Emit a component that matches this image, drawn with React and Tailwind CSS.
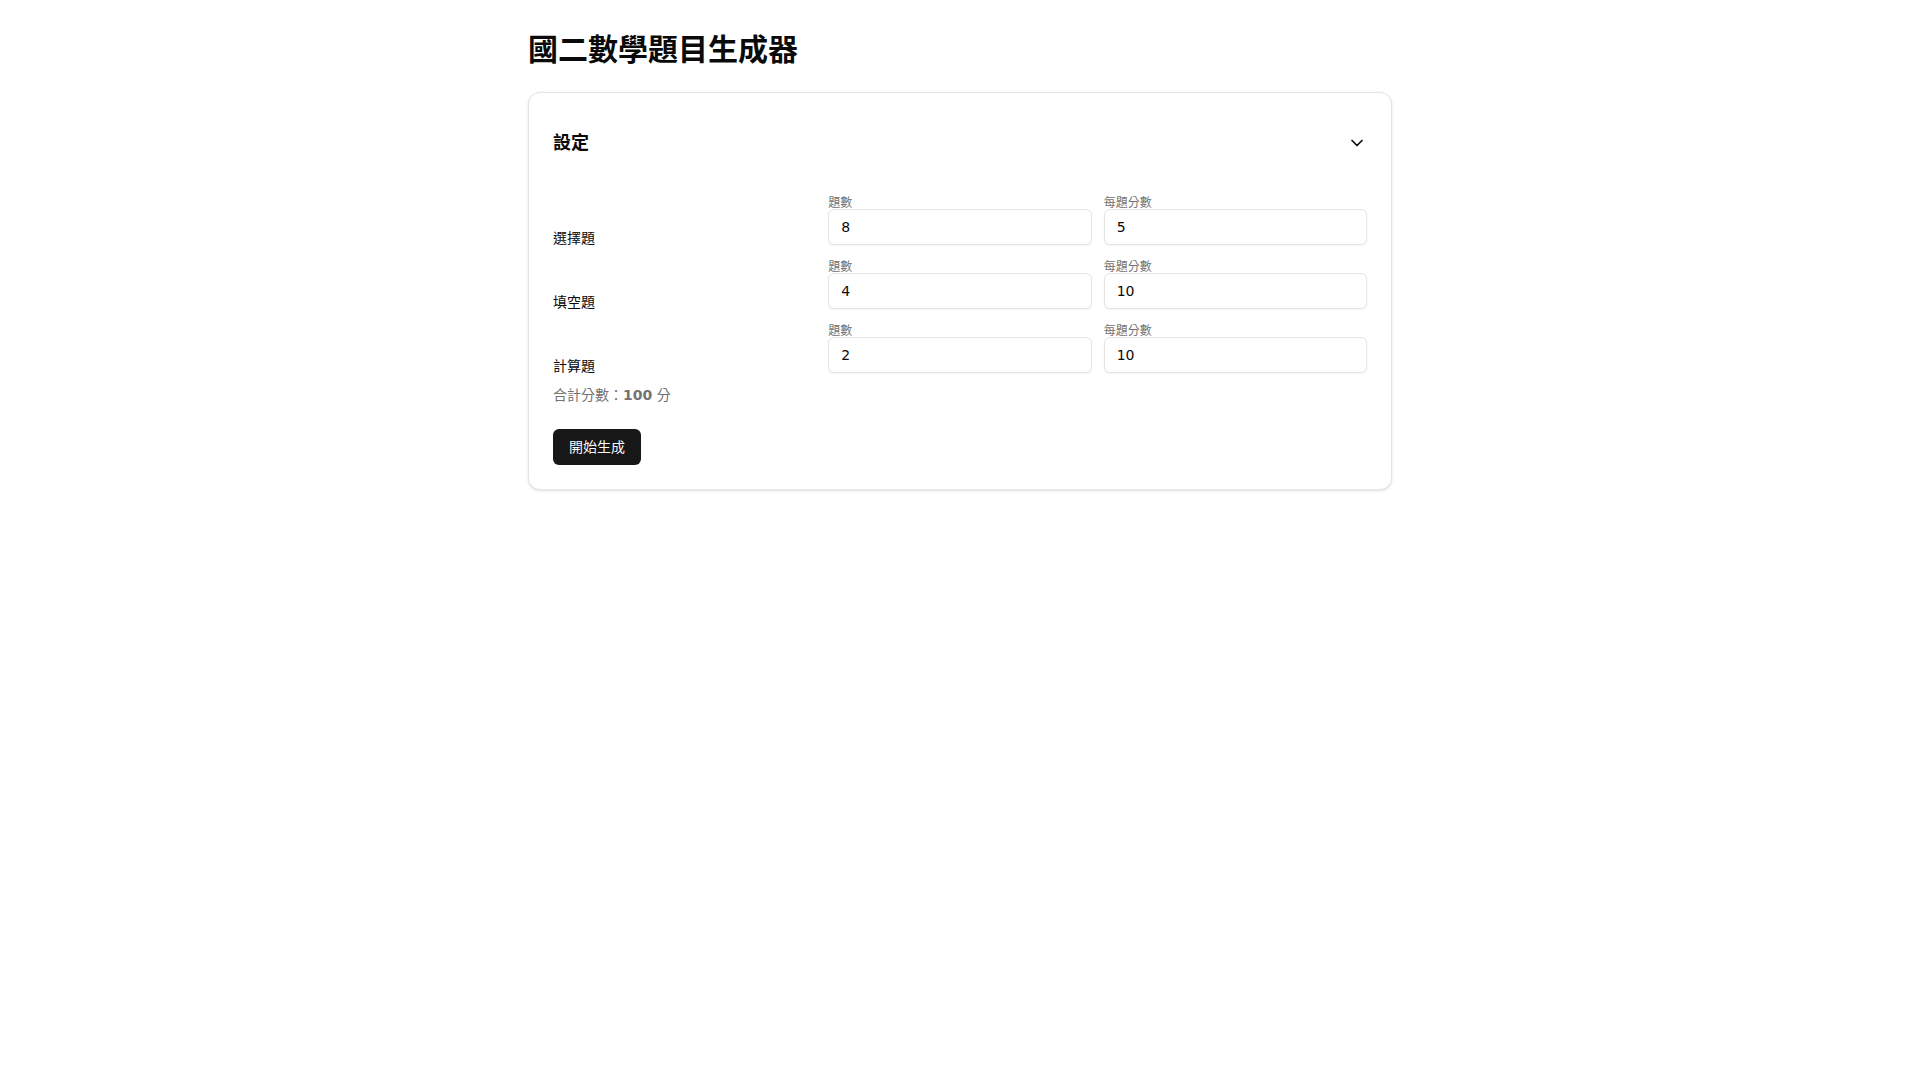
import React from "react";
import { ChevronDown } from "lucide-react";

const rows = [
  { name: "選擇題", count: 8, score: 5 },
  { name: "填空題", count: 4, score: 10 },
  { name: "計算題", count: 2, score: 10 },
];

function Field({ label, value }) {
  return (
    <div className="flex flex-col">
      <label className="text-xs leading-none text-[#737373]">{label}</label>
      <input
        type="number"
        defaultValue={value}
        className="h-9 w-full rounded-md border border-[#e5e5e5] bg-white px-3 text-sm text-[#0a0a0a] shadow-xs outline-none [appearance:textfield] [&::-webkit-inner-spin-button]:appearance-none [&::-webkit-outer-spin-button]:appearance-none"
      />
    </div>
  );
}

export default function App() {
  return (
    <div
      className="min-h-screen bg-white text-[#0a0a0a]"
      style={{ fontFamily: '"DejaVu Sans", "Noto Sans CJK TC", sans-serif' }}
    >
      <div className="mx-auto max-w-4xl px-4 py-8">
        <h1 className="mb-6 text-3xl leading-9 font-bold">國二數學題目生成器</h1>
        <div className="rounded-xl border border-[#e5e5e5] bg-white p-6 shadow-sm">
          <div className="flex h-[52px] items-center justify-between">
            <h2 className="text-lg leading-7 font-semibold">設定</h2>
            <ChevronDown className="h-5 w-5" strokeWidth={2} />
          </div>
          <div className="mt-7 flex flex-col gap-4">
            {rows.map((r) => (
              <div key={r.name} className="grid grid-cols-3 items-end gap-3">
                <div className="text-sm leading-none">{r.name}</div>
                <Field label="題數" value={r.count} />
                <Field label="每題分數" value={r.score} />
              </div>
            ))}
          </div>
          <div className="mt-3 text-sm leading-5 text-[#737373]">
            合計分數：<span className="font-bold">100</span> 分
          </div>
          <button className="mt-6 h-9 rounded-md bg-[#171717] px-4 text-sm text-[#fafafa]">
            開始生成
          </button>
        </div>
      </div>
    </div>
  );
}
